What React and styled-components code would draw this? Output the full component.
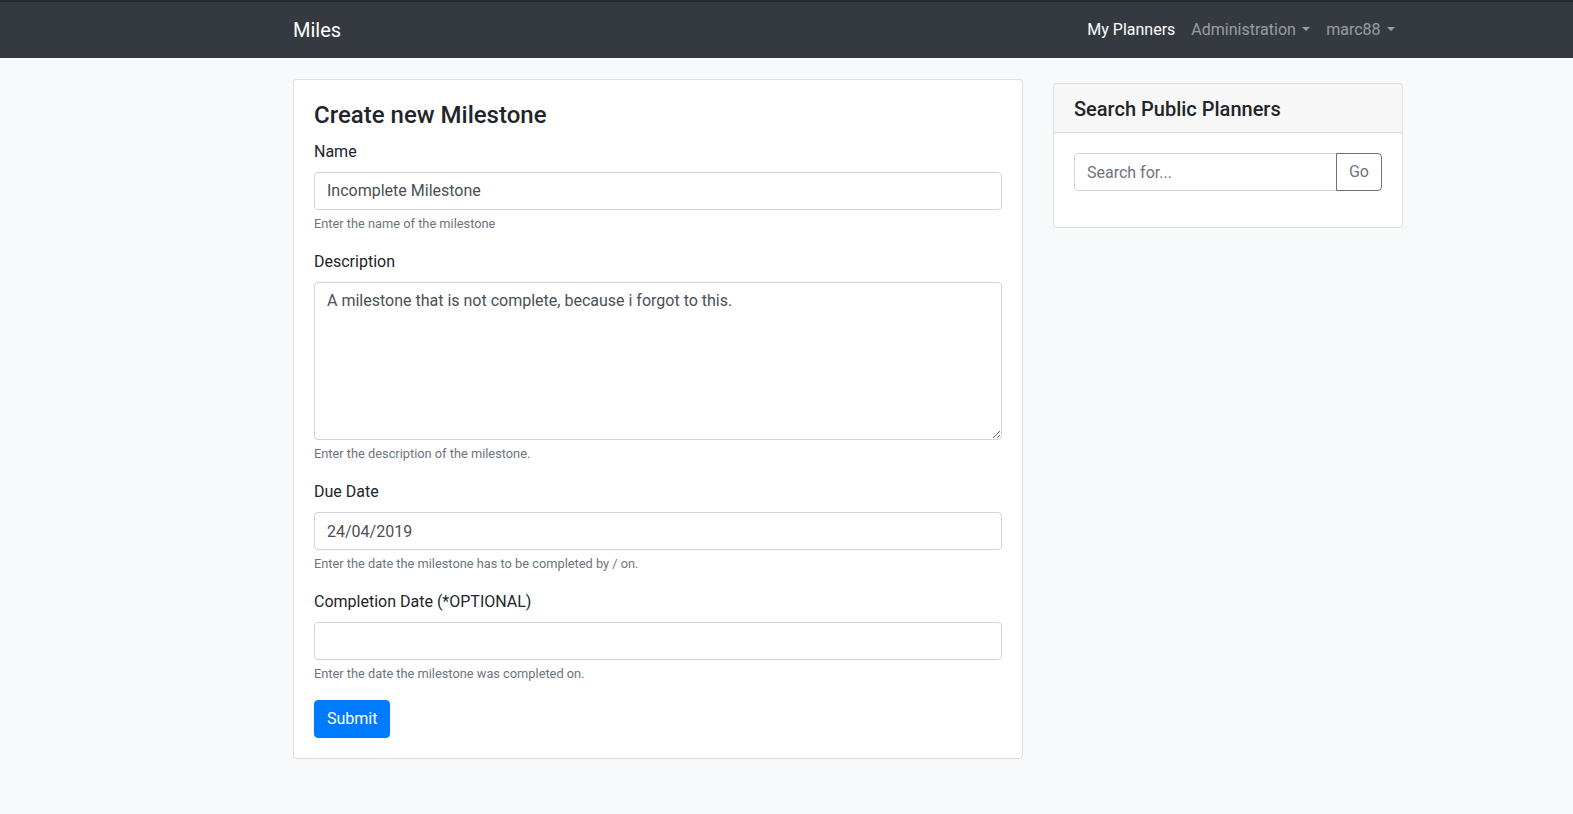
import React from "react";
import styled, { createGlobalStyle } from "styled-components";

const GlobalStyle = createGlobalStyle`
  * { box-sizing: border-box; }
  body {
    margin: 0;
    background: #f8f9fa;
    color: #212529;
    font-family: "Segoe UI", Roboto, "Helvetica Neue", Arial, sans-serif;
    font-size: 16px;
    line-height: 1.5;
  }
`;

const Navbar = styled.nav`
  background: #343a40;
  border-top: 2px solid #26292c;
  padding: 8px 0;
`;

const Container = styled.div`
  width: 1110px;
  margin-left: 293px;
`;

const NavInner = styled(Container)`
  display: flex;
  align-items: center;
  justify-content: space-between;
`;

const Brand = styled.a`
  color: #fff;
  font-size: 20px;
  line-height: 30px;
  padding: 5px 0;
  text-decoration: none;
`;

const NavList = styled.div`
  display: flex;
  align-items: center;
`;

const NavLink = styled.a`
  padding: 8px;
  color: ${(p) => (p.$active ? "#fff" : "rgba(255,255,255,.5)")};
  text-decoration: none;
  white-space: nowrap;
`;

const Caret = styled.span`
  display: inline-block;
  margin-left: 0.4em;
  vertical-align: 0.255em;
  border-top: 0.3em solid;
  border-right: 0.3em solid transparent;
  border-left: 0.3em solid transparent;
  border-bottom: 0;
`;

const Row = styled(Container)`
  display: flex;
  align-items: flex-start;
  gap: 30px;
`;

const Card = styled.div`
  background: #fff;
  border: 1px solid rgba(0, 0, 0, 0.125);
  border-radius: 4px;
  width: ${(p) => p.$width}px;
  margin-top: ${(p) => p.$top}px;
  overflow: hidden;
`;

const CardBody = styled.div`
  padding: 20px;
`;

const CardHeader = styled.div`
  padding: 13px 20px 11px;
  background: rgba(0, 0, 0, 0.03);
  border-bottom: 1px solid rgba(0, 0, 0, 0.125);
`;

const Title = styled.h4`
  margin: 1px 0 10px;
  font-size: 24px;
  font-weight: 500;
  line-height: 1.2;
`;

const HeaderTitle = styled.h5`
  margin: 0;
  font-size: 20px;
  font-weight: 500;
  line-height: 1.2;
`;

const FormGroup = styled.div`
  margin-bottom: ${(p) => (p.$last ? 16 : 17)}px;
`;

const Label = styled.label`
  display: inline-block;
  margin-bottom: 8px;
`;

const Input = styled.input`
  display: block;
  width: 100%;
  height: 38px;
  padding: 6px 12px;
  font: inherit;
  color: #495057;
  background: #fff;
  border: 1px solid #ced4da;
  border-radius: 4px;
  outline: none;
  &::placeholder { color: #6c757d; }
`;

const TextArea = styled.textarea`
  display: block;
  width: 100%;
  height: ${(p) => p.$height}px;
  padding: 6px 12px;
  font: inherit;
  color: #495057;
  background: #fff;
  border: 1px solid #ced4da;
  border-radius: 4px;
  outline: none;
  resize: vertical;
`;

const Help = styled.small`
  display: block;
  margin-top: 4px;
  font-size: 12.8px;
  color: #6c757d;
`;

const Button = styled.button`
  display: inline-block;
  padding: 6px 12px;
  font: inherit;
  line-height: 1.5;
  color: #fff;
  background: #007bff;
  border: 1px solid #007bff;
  border-radius: 4px;
  cursor: pointer;
`;

const InputGroup = styled.div`
  display: flex;
  margin-bottom: 16px;
`;

const GroupInput = styled(Input)`
  flex: 1;
  width: auto;
  border-top-right-radius: 0;
  border-bottom-right-radius: 0;
`;

const GoButton = styled.button`
  padding: 6px 12px;
  font: inherit;
  line-height: 1.5;
  color: #6c757d;
  background: transparent;
  border: 1px solid #6c757d;
  border-radius: 0 4px 4px 0;
  margin-left: -1px;
`;

export default function App() {
  return (
    <>
      <GlobalStyle />
      <Navbar>
        <NavInner>
          <Brand href="#">Miles</Brand>
          <NavList>
            <NavLink $active href="#">My Planners</NavLink>
            <NavLink href="#">
              Administration<Caret />
            </NavLink>
            <NavLink href="#">
              marc88<Caret />
            </NavLink>
          </NavList>
        </NavInner>
      </Navbar>
      <Row>
        <Card $width={730} $top={21}>
          <CardBody>
            <Title>Create new Milestone</Title>
            <FormGroup>
              <Label>Name</Label>
              <Input defaultValue="Incomplete Milestone" />
              <Help>Enter the name of the milestone</Help>
            </FormGroup>
            <FormGroup>
              <Label>Description</Label>
              <TextArea
                $height={158}
                defaultValue="A milestone that is not complete, because i forgot to this."
              />
              <Help>Enter the description of the milestone.</Help>
            </FormGroup>
            <FormGroup>
              <Label>Due Date</Label>
              <Input defaultValue="24/04/2019" />
              <Help>Enter the date the milestone has to be completed by / on.</Help>
            </FormGroup>
            <FormGroup $last>
              <Label>Completion Date (*OPTIONAL)</Label>
              <Input defaultValue="" />
              <Help>Enter the date the milestone was completed on.</Help>
            </FormGroup>
            <Button>Submit</Button>
          </CardBody>
        </Card>
        <Card $width={350} $top={25}>
          <CardHeader>
            <HeaderTitle>Search Public Planners</HeaderTitle>
          </CardHeader>
          <CardBody>
            <InputGroup>
              <GroupInput placeholder="Search for..." />
              <GoButton>Go</GoButton>
            </InputGroup>
          </CardBody>
        </Card>
      </Row>
    </>
  );
}
